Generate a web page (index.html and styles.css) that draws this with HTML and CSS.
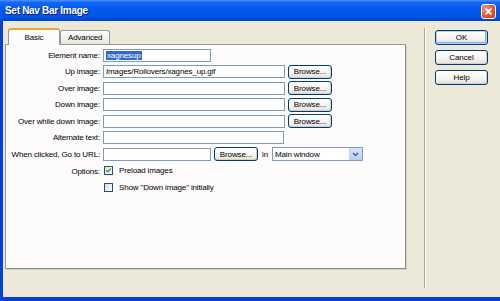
FILE: index.html
```html
<!DOCTYPE html>
<html lang="en">
<head>
  <meta charset="UTF-8">
  <title>Set Nav Bar Image</title>
  <link rel="stylesheet" href="styles.css">
</head>
<body>
  <div class="window">
    <div class="titlebar">
      <span class="title">Set Nav Bar Image</span>
      <span class="close">
        <svg width="15" height="15" viewBox="0 0 15 15">
          <path d="M4.5 4.5 L10.5 10.5 M10.5 4.5 L4.5 10.5" stroke="#fff" stroke-width="1.8" stroke-linecap="round"/>
        </svg>
      </span>
    </div>

    <div class="client">
      <div class="tab-area">
        <div class="tabs">
          <div class="tab active">Basic</div>
          <div class="tab">Advanced</div>
        </div>

        <div class="panel">
          <div class="form">
            <label>Element name:</label>
            <div class="field"><div class="textbox w-short"><span class="selected">xagnesup</span></div></div>

            <label>Up image:</label>
            <div class="field">
              <div class="textbox w-long">Images/Rollovers/xagnes_up.gif</div>
              <button class="btn browse">Browse...</button>
            </div>

            <label>Over image:</label>
            <div class="field">
              <div class="textbox w-long"></div>
              <button class="btn browse">Browse...</button>
            </div>

            <label>Down image:</label>
            <div class="field">
              <div class="textbox w-long"></div>
              <button class="btn browse">Browse...</button>
            </div>

            <label>Over while down image:</label>
            <div class="field">
              <div class="textbox w-long"></div>
              <button class="btn browse">Browse...</button>
            </div>

            <label>Alternate text:</label>
            <div class="field"><div class="textbox w-alt"></div></div>

            <label>When clicked, Go to URL:</label>
            <div class="field">
              <div class="textbox w-short"></div>
              <button class="btn browse">Browse...</button>
              <span class="in">in</span>
              <div class="combo">
                <span>Main window</span>
                <span class="combo-arrow">
                  <svg width="7" height="5" viewBox="0 0 7 5">
                    <path d="M1 1 L3.5 3.5 L6 1" fill="none" stroke="#4d6185" stroke-width="1.5"/>
                  </svg>
                </span>
              </div>
            </div>

            <label class="options-label">Options:</label>
            <div class="field check-row">
              <span class="checkbox">
                <svg width="9" height="9" viewBox="0 0 9 9">
                  <path d="M1.5 4.2 L3.5 6.3 L7.5 2" fill="none" stroke="#21a121" stroke-width="1.6"/>
                </svg>
              </span>
              <span>Preload images</span>
            </div>

            <label></label>
            <div class="field check-row">
              <span class="checkbox"></span>
              <span>Show "Down image" initially</span>
            </div>
          </div>
        </div>
      </div>

      <div class="separator"></div>

      <div class="buttons">
        <button class="btn dialog default">OK</button>
        <button class="btn dialog">Cancel</button>
        <button class="btn dialog">Help</button>
      </div>
    </div>
  </div>
</body>
</html>
```

FILE: styles.css
```css
body {
  margin: 0;
  padding: 0;
  font-family: 'Liberation Sans', Arial, sans-serif;
  font-size: 8px;
  letter-spacing: -0.15px;
  color: #000;
  background-color: #ece9d8;
}

.window {
  width: 500px;
  height: 301px;
  display: flex;
  flex-direction: column;
  background-color: #0a3fd6;
  overflow: hidden;
}

.titlebar {
  height: 21px;
  flex: none;
  display: flex;
  align-items: center;
  justify-content: space-between;
  padding: 0 4px 0 5px;
  background: linear-gradient(#4a95fb 0%, #1467f4 12%, #0058ea 45%, #0254e5 80%, #0043cc 100%);
}

.title {
  color: #fff;
  font-weight: bold;
  font-size: 10px;
  letter-spacing: -0.3px;
  text-shadow: 1px 1px 0 #0a1883;
}

.close {
  width: 15px;
  height: 15px;
  margin-top: 1px;
  border: 1px solid #fff;
  border-radius: 3px;
  box-sizing: border-box;
  display: flex;
  align-items: center;
  justify-content: center;
  background: radial-gradient(circle at 30% 30%, #f29b7e, #e0522c 60%, #c2391a);
}

.close svg {
  display: block;
}

.client {
  flex: 1;
  margin: 0 0 4px 3px;
  background-color: #ece9d8;
  display: flex;
  align-items: flex-start;
  padding: 7px 0 0 2px;
}

.tab-area {
  width: 401px;
}

.tabs {
  display: flex;
  align-items: flex-end;
  height: 16px;
  padding-left: 3px;
}

.tab {
  height: 13px;
  padding: 0 7px;
  border: 1px solid #919b9c;
  border-bottom: none;
  border-radius: 3px 3px 0 0;
  background: linear-gradient(#ffffff, #f3f2ec 60%, #e6e4dc);
  display: flex;
  align-items: center;
  justify-content: center;
}

.tab.active {
  width: 32px;
  padding: 0 9px 1px;
  height: 14px;
  border-top: 2px solid #f2a133;
  background: #fcfcfe;
  position: relative;
  z-index: 1;
  margin-bottom: -1px;
}

.panel {
  height: 223px;
  border: 1px solid #919b9c;
  border-right-color: #8e9294;
  border-bottom-color: #8a8e90;
  background-color: #fdfbfb;
  box-shadow: 1px 1px 0 #d2cfc2;
}

.form {
  display: grid;
  grid-template-columns: 94px 1fr;
  grid-auto-rows: 14px;
  row-gap: 2.5px;
  column-gap: 3px;
  padding-top: 3px;
}

.form label {
  text-align: right;
  align-self: center;
  white-space: nowrap;
}

.options-label {
  margin-top: 2px;
}

.field {
  display: flex;
  align-items: center;
  gap: 3px;
}

.textbox {
  height: 13px;
  box-sizing: border-box;
  border: 1px solid #7f9db9;
  background-color: #fff;
  padding-left: 2px;
  display: flex;
  align-items: center;
  white-space: nowrap;
  overflow: hidden;
}

.w-short { width: 108px; }
.w-long { width: 182px; }
.w-alt { width: 181px; }

.selected {
  background-color: #316ac5;
  color: #fff;
  padding: 0 1px;
}

.btn {
  font-family: 'Liberation Sans', Arial, sans-serif;
  font-size: 8px;
  letter-spacing: -0.1px;
  color: #000;
  border: 1px solid #003c74;
  border-radius: 3px;
  background: linear-gradient(#ffffff, #f4f3ee 60%, #e3e0d6);
  box-shadow: inset -1px -1px 0 #d6d0c5;
  padding: 0;
  box-sizing: border-box;
}

.browse {
  width: 44px;
  height: 14px;
}

.in {
  margin-left: 1px;
}

.combo {
  width: 91px;
  height: 14px;
  box-sizing: border-box;
  border: 1px solid #7f9db9;
  background-color: #fff;
  display: flex;
  align-items: center;
  justify-content: space-between;
  padding-left: 2px;
  margin-left: 1px;
}

.combo-arrow {
  width: 12px;
  height: 12px;
  display: flex;
  align-items: center;
  justify-content: center;
  background: linear-gradient(#d5e1fc, #b8cdf8);
  border-left: 1px solid #c8d6f7;
}

.check-row {
  gap: 6px;
  padding-left: 1px;
}

.checkbox {
  width: 9px;
  height: 9px;
  box-sizing: border-box;
  border: 1px solid #1c5180;
  background: linear-gradient(135deg, #dcdcd7, #ffffff);
  display: flex;
  align-items: center;
  justify-content: center;
}

.checkbox svg {
  display: block;
}

.separator {
  width: 1px;
  height: 260px;
  margin-left: 18px;
  background-color: #aca899;
  border-right: 1px solid #fff;
}

.buttons {
  margin-left: 9px;
  margin-top: 2px;
  display: flex;
  flex-direction: column;
  gap: 5px;
}

.dialog {
  width: 53px;
  height: 15px;
}

.dialog.default {
  box-shadow: inset 0 0 0 1px #b9d1fa, inset -1px -1px 0 1px #89adf0;
}
```
